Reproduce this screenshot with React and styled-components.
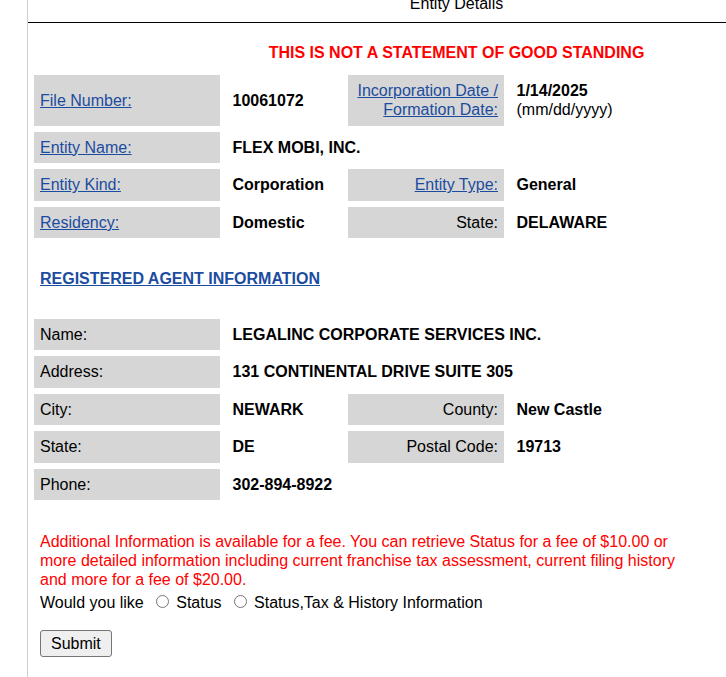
import React from 'react';
import styled, { createGlobalStyle } from 'styled-components';

const GlobalStyle = createGlobalStyle`
    html, body {
        margin: 0;
        padding: 0;
        overflow: hidden;
        background: #fff;
    }
    body {
        font-family: "Liberation Sans", Arial, sans-serif;
        font-size: 16px;
        color: #000;
    }
`;

const Page = styled.div`
    margin: -5px 0 0 27px;
    width: 857px;
    min-height: 720px;
    border-left: 1px solid #cfcfcf;
`;

const Title = styled.div`
    text-align: center;
    line-height: 18px;
    padding-bottom: 9px;
    border-bottom: 1px solid #000;
`;

const Body = styled.div`
    padding: 0 6px;
`;

const Warning = styled.div`
    margin: 20px 0 13px;
    text-align: center;
    color: #f00;
    font-weight: bold;
    line-height: 19px;
`;

const Grid = styled.div`
    display: grid;
    grid-template-columns: 186px 124px 156px 1fr;
    column-gap: 2px;
    row-gap: 6px;
`;

const Label = styled.div`
    background: #d6d6d6;
    padding: 6.25px 6px;
    line-height: 19px;
    display: flex;
    flex-direction: column;
    justify-content: center;
    align-items: ${p => (p.$right ? 'flex-end' : 'flex-start')};
    text-align: ${p => (p.$right ? 'right' : 'left')};
`;

const Value = styled.div`
    padding: 6.25px 10px 6.25px 10.5px;
    line-height: 19px;
    font-weight: bold;
    display: flex;
    flex-direction: column;
    justify-content: center;
    grid-column: ${p => (p.$wide ? 'span 3' : 'auto')};
`;

const Plain = styled.span`
    font-weight: normal;
`;

const Link = styled.a`
    color: #1b4c9f;
    text-decoration: underline;
`;

const SectionHead = styled.a`
    display: block;
    margin: 31px 0 30.5px;
    padding-left: 6px;
    line-height: 19px;
    font-weight: bold;
    color: #1b4c9f;
    text-decoration: underline;
`;

const Notice = styled.p`
    margin: 31.5px 0 0;
    padding-left: 6px;
    width: 660px;
    line-height: 19px;
    color: #f00;
`;

const Choice = styled.div`
    margin-top: 3px;
    padding-left: 6px;
    line-height: 19px;
`;

const Radio = styled.input`
    width: 13px;
    height: 13px;
    margin: 3px 3px 0 12px;
`;

const Submit = styled.button`
    margin: 18px 0 0 6px;
    padding: 3px 10px;
    font-family: "Liberation Sans", Arial, sans-serif;
    font-size: 16px;
    line-height: 19px;
    color: #000;
    background: #efefef;
    border: 1px solid #767676;
    border-radius: 3px;
`;

const App = () => (
    <>
        <GlobalStyle />
        <Page>
            <Title>Entity Details</Title>
            <Body>
                <Warning>THIS IS NOT A STATEMENT OF GOOD STANDING</Warning>
                <Grid>
                    <Label><Link href="#">File Number:</Link></Label>
                    <Value>10061072</Value>
                    <Label $right>
                        <Link href="#">Incorporation Date /<br />Formation Date:</Link>
                    </Label>
                    <Value>
                        <span>1/14/2025</span>
                        <Plain>(mm/dd/yyyy)</Plain>
                    </Value>

                    <Label><Link href="#">Entity Name:</Link></Label>
                    <Value $wide>FLEX MOBI, INC.</Value>

                    <Label><Link href="#">Entity Kind:</Link></Label>
                    <Value>Corporation</Value>
                    <Label $right><Link href="#">Entity Type:</Link></Label>
                    <Value>General</Value>

                    <Label><Link href="#">Residency:</Link></Label>
                    <Value>Domestic</Value>
                    <Label $right>State:</Label>
                    <Value>DELAWARE</Value>
                </Grid>

                <SectionHead href="#">REGISTERED AGENT INFORMATION</SectionHead>

                <Grid>
                    <Label>Name:</Label>
                    <Value $wide>LEGALINC CORPORATE SERVICES INC.</Value>

                    <Label>Address:</Label>
                    <Value $wide>131 CONTINENTAL DRIVE SUITE 305</Value>

                    <Label>City:</Label>
                    <Value>NEWARK</Value>
                    <Label $right>County:</Label>
                    <Value>New Castle</Value>

                    <Label>State:</Label>
                    <Value>DE</Value>
                    <Label $right>Postal Code:</Label>
                    <Value>19713</Value>

                    <Label>Phone:</Label>
                    <Value $wide>302-894-8922</Value>
                </Grid>

                <Notice>
                    Additional Information is available for a fee. You can retrieve Status for a fee of $10.00 or
                    more detailed information including current franchise tax assessment, current filing history
                    and more for a fee of $20.00.
                </Notice>
                <Choice>
                    Would you like
                    <Radio type="radio" name="info" /> Status
                    <Radio type="radio" name="info" /> Status,Tax &amp; History Information
                </Choice>
                <Submit type="button">Submit</Submit>
            </Body>
        </Page>
    </>
);

export default App;
